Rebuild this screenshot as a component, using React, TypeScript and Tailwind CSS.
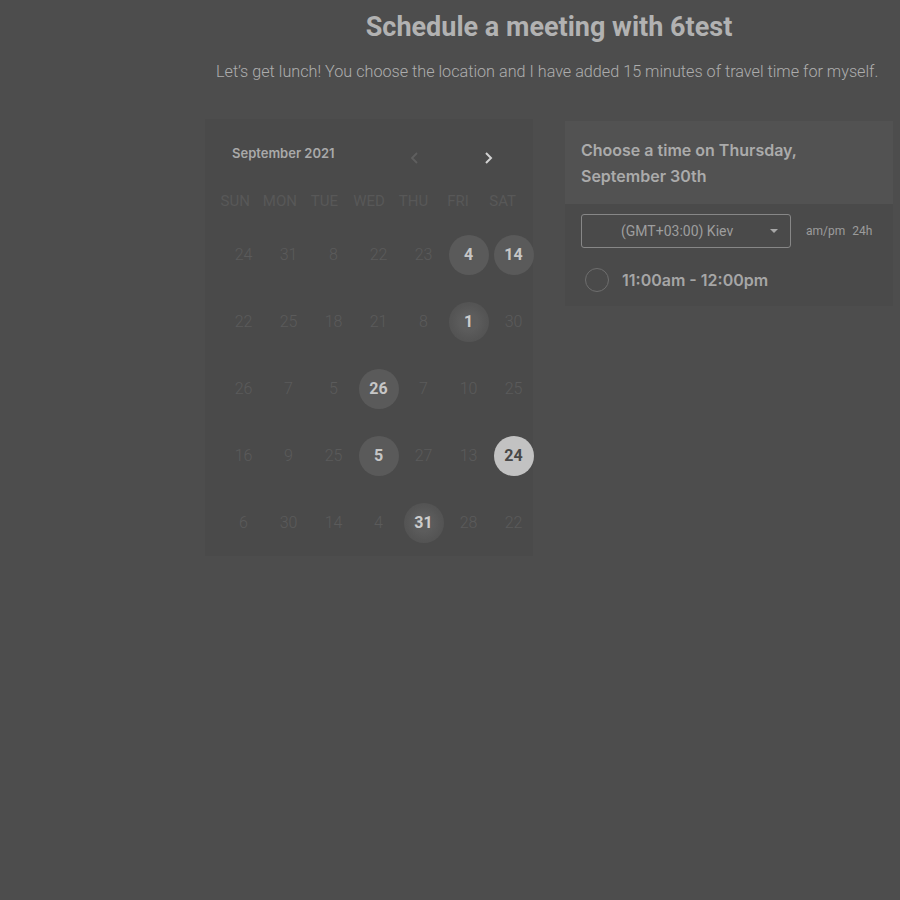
const weekdays = ['SUN', 'MON', 'TUE', 'WED', 'THU', 'FRI', 'SAT']

type Day = { n: number; kind?: 'on' | 'sel' | 'tex' }

const rows: Day[][] = [
  [{ n: 24 }, { n: 31 }, { n: 8 }, { n: 22 }, { n: 23 }, { n: 4, kind: 'on' }, { n: 14, kind: 'on' }],
  [{ n: 22 }, { n: 25 }, { n: 18 }, { n: 21 }, { n: 8 }, { n: 1, kind: 'tex' }, { n: 30 }],
  [{ n: 26 }, { n: 7 }, { n: 5 }, { n: 26, kind: 'on' }, { n: 7 }, { n: 10 }, { n: 25 }],
  [{ n: 16 }, { n: 9 }, { n: 25 }, { n: 5, kind: 'on' }, { n: 27 }, { n: 13 }, { n: 24, kind: 'sel' }],
  [{ n: 6 }, { n: 30 }, { n: 14 }, { n: 4 }, { n: 31, kind: 'tex' }, { n: 28 }, { n: 22 }],
]

const DayCell = ({ day }: { day: Day }) => {
  if (day.kind === 'on')
    return (
      <div className="size-10 rounded-full bg-[#5a5a5a] flex items-center justify-center text-[16px] font-bold text-[#c6c6c6]">
        {day.n}
      </div>
    )
  if (day.kind === 'sel')
    return (
      <div className="size-10 rounded-full bg-[#c2c2c2] flex items-center justify-center text-[16px] font-bold text-[#484848]">
        {day.n}
      </div>
    )
  if (day.kind === 'tex')
    return (
      <div className="size-10 rounded-full bg-[radial-gradient(circle,#5c5c5c_30%,#555_60%,#4f4f4f_100%)] flex items-center justify-center text-[16px] font-bold text-[#cdcdcd]">
        {day.n}
      </div>
    )
  return <div className="size-10 flex items-center justify-center text-[16px] font-light text-[#5b5b5b]">{day.n}</div>
}

export default function App() {
  return (
    <div className="min-h-[900px] w-full bg-[#4d4d4d] font-['Roboto',sans-serif]">
      <div className="pl-[205px] pr-[7px] pt-[12px]">
        <h1 className="text-center font-['Roboto',sans-serif] text-[27px] font-bold text-[#b2b2b2] leading-[30px]">
          Schedule a meeting with 6test
        </h1>
        <p className="mt-[20px] pl-[11px] text-[16.2px] font-light text-[#adadad] leading-[20px] whitespace-nowrap">
          Let’s get lunch! You choose the location and I have added 15 minutes of travel time for myself.
        </p>

        <div className="mt-[37px] flex gap-[32px] items-start">
          {/* calendar */}
          <div className="w-[328px] h-[437px] bg-[#4a4a4a] pt-[24px] pl-[8px]">
            <div className="flex items-center">
              <span className="pl-[19px] w-[194px] font-['Inter',sans-serif] text-[13px] font-semibold text-[#a9a9a9]">
                September 2021
              </span>
              <svg className="ml-[3px] mt-[8px]" width="10" height="14" viewBox="0 0 10 14">
                <path d="M7 2 L2 7 L7 12" stroke="#5f5f5f" strokeWidth="1.8" fill="none" />
              </svg>
              <svg className="ml-[63px] mt-[8px]" width="10" height="14" viewBox="0 0 10 14">
                <path d="M3 2 L8 7 L3 12" stroke="#d2d2d2" strokeWidth="2" fill="none" />
              </svg>
            </div>
            <div className="mt-[27px] grid grid-cols-7 w-[312px]">
              {weekdays.map((w) => (
                <div key={w} className="text-center text-[15px] text-[#585858] leading-[18px]">
                  {w}
                </div>
              ))}
            </div>
            <div className="mt-[25px] flex flex-col gap-[27px] pl-[8px]">
              {rows.map((row, i) => (
                <div key={i} className="grid grid-cols-7 w-[315px]">
                  {row.map((d, j) => (
                    <div key={j} className="flex justify-center">
                      <DayCell day={d} />
                    </div>
                  ))}
                </div>
              ))}
            </div>
          </div>

          {/* time picker */}
          <div className="mt-[2px] w-[328px]">
            <div className="bg-[#525252] h-[83px] px-[16px] pt-[16px] font-['Inter',sans-serif] text-[16px] font-semibold text-[#ababab] leading-[26px]">
              Choose a time on Thursday,
              <br />
              September 30th
            </div>
            <div className="bg-[#4a4a4a] h-[102px] px-[16px] pt-[10px]">
              <div className="flex items-center">
                <div className="w-[210px] h-[34px] border border-[#878787] rounded-[3px] flex items-center pl-[39px] pr-[12px] text-[14px] text-[#9e9e9e]">
                  <span className="flex-1">(GMT+03:00) Kiev</span>
                  <svg width="8" height="5" viewBox="0 0 8 5">
                    <path d="M0 0 L8 0 L4 4 Z" fill="#a8a8a8" />
                  </svg>
                </div>
                <span className="ml-[15px] text-[12px] text-[#9c9c9c]">am/pm</span>
                <span className="ml-[7px] text-[12px] text-[#9c9c9c]">24h</span>
              </div>
              <div className="mt-[20px] flex items-center pl-[4px]">
                <div className="size-[24px] rounded-full border-[1.5px] border-[#6e6e6e]" />
                <span className="ml-[13px] font-['Inter',sans-serif] text-[16px] font-semibold text-[#a6a6a6]">
                  11:00am - 12:00pm
                </span>
              </div>
            </div>
          </div>
        </div>
      </div>
    </div>
  )
}
